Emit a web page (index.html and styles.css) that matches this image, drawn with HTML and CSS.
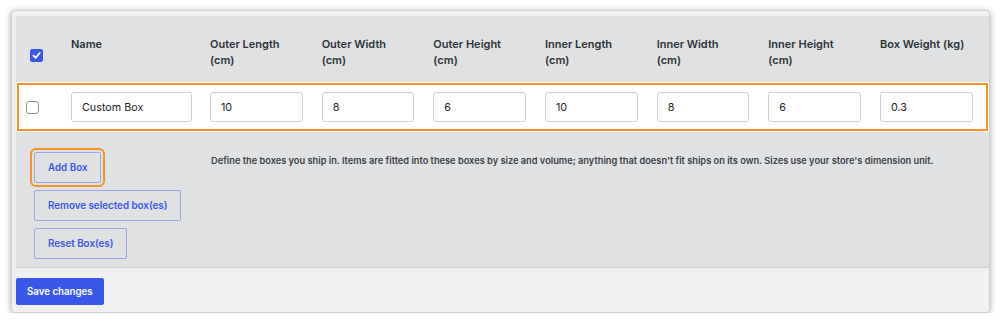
FILE: index.html
```html
<!DOCTYPE html>
<html lang="en">
<head>
  <meta charset="UTF-8" />
  <meta name="viewport" content="width=device-width, initial-scale=1.0"/>
  <title>Shipping Boxes</title>
  <link rel="stylesheet" href="styles.css">
</head>
<body>
  <div class="card">
    <div class="boxes">
      <div class="grid head">
        <div class="cell check">
          <span class="cb cb-on">
            <svg width="9" height="9" viewBox="0 0 10 10"><path d="M1.6 5.2 L4 7.6 L8.6 2.2" fill="none" stroke="#fff" stroke-width="1.9" stroke-linecap="round" stroke-linejoin="round"/></svg>
          </span>
        </div>
        <div class="cell">Name</div>
        <div class="cell">Outer Length<br>(cm)</div>
        <div class="cell">Outer Width<br>(cm)</div>
        <div class="cell">Outer Height<br>(cm)</div>
        <div class="cell">Inner Length<br>(cm)</div>
        <div class="cell">Inner Width<br>(cm)</div>
        <div class="cell">Inner Height<br>(cm)</div>
        <div class="cell">Box Weight (kg)</div>
      </div>

      <div class="grid row highlight">
        <div class="cell check"><span class="cb"></span></div>
        <div class="cell name"><input class="field" type="text" value="Custom Box"></div>
        <div class="cell"><input class="field" type="text" value="10"></div>
        <div class="cell"><input class="field" type="text" value="8"></div>
        <div class="cell"><input class="field" type="text" value="6"></div>
        <div class="cell"><input class="field" type="text" value="10"></div>
        <div class="cell"><input class="field" type="text" value="8"></div>
        <div class="cell"><input class="field" type="text" value="6"></div>
        <div class="cell"><input class="field" type="text" value="0.3"></div>
      </div>

      <div class="actions">
        <div class="buttons">
          <button class="btn focused">Add Box</button>
          <button class="btn">Remove selected box(es)</button>
          <button class="btn">Reset Box(es)</button>
        </div>
        <p class="desc">Define the boxes you ship in. Items are fitted into these boxes by size and volume; anything that doesn't fit ships on its own. Sizes use your store's dimension unit.</p>
      </div>
    </div>

    <div class="footer">
      <button class="btn-primary">Save changes</button>
    </div>
  </div>
</body>
</html>
```

FILE: styles.css
```css
body {
  margin: 0;
  background-color: #fff;
  font-family: Inter, "Noto Sans", sans-serif;
  color: #1d2327;
}

.card {
  box-sizing: border-box;
  margin: 10px 0 0 11px;
  width: 979px;
  height: 303px;
  padding: 5px 0 0 4px;
  background-color: #f0f0f1;
  border: 1px solid #d0d1d3;
  border-radius: 4px;
  box-shadow: 0 1px 6px rgba(0,0,0,0.35);
}

.boxes {
  background-color: #dfe1e3;
  border-bottom: 1px solid #cfd1d4;
}

.grid {
  display: grid;
  grid-template-columns: 55px 139px repeat(6, 111.67px) 1fr;
}

.head {
  height: 66px;
  font-size: 11px;
  font-weight: 600;
  line-height: 16px;
  color: #2c3338;
}

.head .cell {
  padding-top: 20px;
}

.head .check {
  padding: 32px 0 0 14px;
}

.row {
  height: 50px;
  background-color: #fff;
  align-items: center;
}

.highlight {
  outline: 2px solid #f7941d;
  outline-offset: -3px;
}

.row .cell {
  padding-right: 19px;
}

.row .name {
  padding-right: 18px;
}

.row .cell:last-child {
  padding-right: 16px;
}

.row .check {
  padding-left: 10px;
  display: flex;
}

.cb {
  box-sizing: border-box;
  display: inline-flex;
  align-items: center;
  justify-content: center;
  width: 13px;
  height: 13px;
  border: 1px solid #8c8f94;
  border-radius: 3px;
  background-color: #fff;
}

.cb-on {
  border-color: #3858e9;
  background-color: #3858e9;
  border-radius: 2px;
}

.field {
  box-sizing: border-box;
  width: 100%;
  height: 30px;
  padding: 0 10px;
  border: 1px solid #cfd0d2;
  border-radius: 3px;
  font-family: inherit;
  font-size: 10.75px;
  color: #1e1e1e;
  background-color: #fff;
}

.actions {
  display: grid;
  grid-template-columns: 194px 1fr;
  height: 135px;
  padding-top: 20px;
  box-sizing: border-box;
}

.buttons {
  display: flex;
  flex-direction: column;
  align-items: flex-start;
  gap: 7px;
  padding-left: 18px;
}

.btn {
  height: 31px;
  padding: 0 13px;
  border: 1px solid #97a6ef;
  border-radius: 2px;
  background: transparent;
  color: #3858e9;
  font-family: inherit;
  font-size: 9.8px;
  font-weight: 600;
}

.focused {
  outline: 2px solid #f7941d;
  outline-offset: 2px;
}

.desc {
  margin: 2px 0 0 1px;
  font-size: 9.25px;
  font-weight: 600;
  line-height: 14px;
  color: #3c434a;
}

.footer {
  padding: 10px 0 0 0;
}

.btn-primary {
  height: 27px;
  padding: 0 10px;
  border: 1px solid #3858e9;
  border-radius: 2px;
  background-color: #3858e9;
  color: #fff;
  font-family: inherit;
  font-size: 9.7px;
  font-weight: 600;
}
```
